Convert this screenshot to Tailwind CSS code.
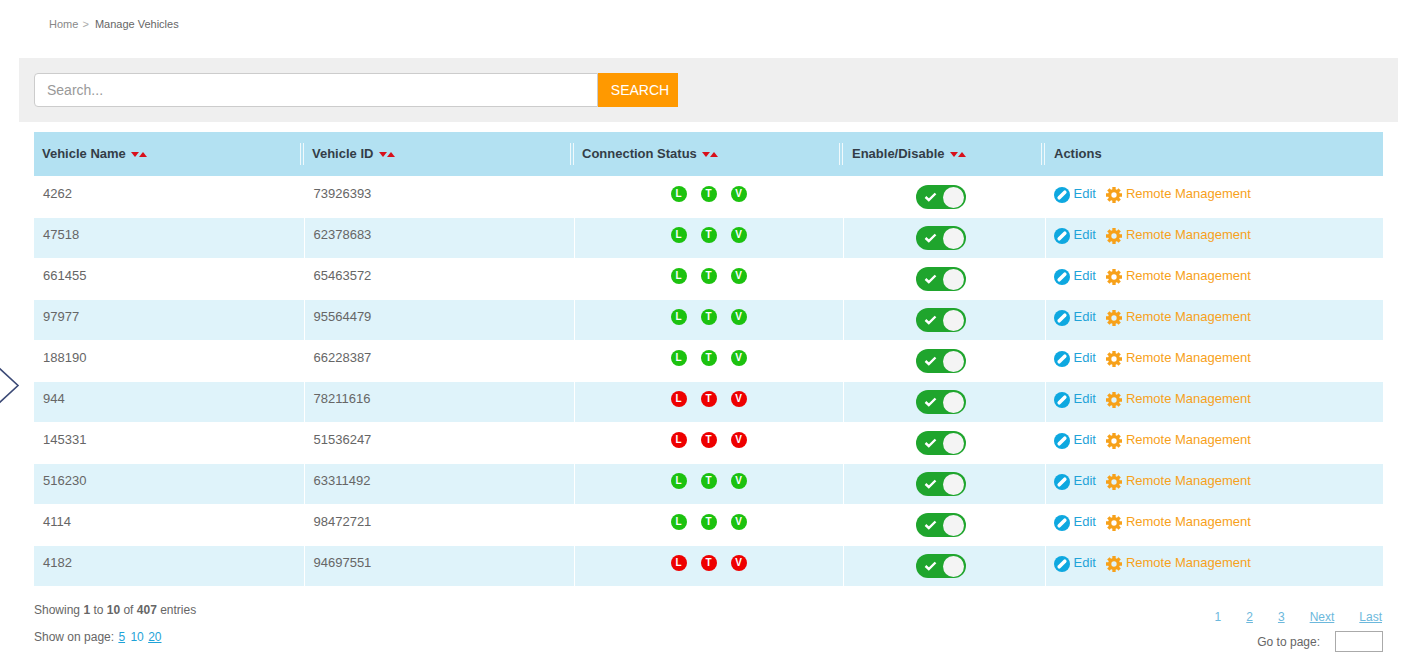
<!DOCTYPE html>
<html lang="en">
<head>
    <meta charset="UTF-8">
    <meta name="viewport" content="width=device-width, initial-scale=1.0">
    <title>Manage Vehicles</title>
    <script src="https://cdn.jsdelivr.net/npm/@tailwindcss/browser@4"></script>
</head>
<body class="bg-white font-['Liberation_Sans',Arial,sans-serif] text-[13px] text-[#666] h-[661px] overflow-hidden relative">

    <!-- Side drawer handle -->
    <svg class="absolute left-0 top-[366px]" width="20" height="40" viewBox="0 0 20 40" fill="none">
        <path d="M-1 2 L18 19.5 L-1 37" stroke="#3c4a76" stroke-width="1.6"/>
    </svg>

    <!-- Breadcrumb -->
    <nav class="pl-[49px] pt-[17px] h-[58px] text-[11px] leading-[14px]">
        <span class="text-[#888]">Home</span>
        <span class="text-[#aaa] ml-[1px] mr-[3px]">&gt;</span>
        <span class="text-[#666]">Manage Vehicles</span>
    </nav>

    <!-- Search -->
    <div class="ml-[19px] w-[1379px] h-[64px] bg-[#efefef] pl-[15px] pt-[15px] flex">
        <input type="text" placeholder="Search..." class="w-[564px] h-[34px] bg-white border border-[#ccc] rounded-l-[4px] px-3 text-sm outline-none placeholder:text-[#999]">
        <button class="w-[80px] h-[34px] pl-[4px] bg-[#ff9900] text-white text-sm">SEARCH</button>
    </div>

    <!-- Vehicles table -->
    <div class="ml-[34px] mt-[10px] w-[1349px]">
        <table class="w-full table-fixed border-collapse">
            <colgroup>
                <col class="w-[270px]"><col class="w-[270px]"><col class="w-[269px]"><col class="w-[202px]"><col>
            </colgroup>
            <thead>
                <tr class="h-[44px] bg-[#b3e1f2] text-[#333d47] text-left">
                    <th class="font-bold pl-[8px] relative">Vehicle Name</th>
                    <th class="font-bold pl-[8px] relative">Vehicle ID</th>
                    <th class="font-bold pl-[8px] relative">Connection Status</th>
                    <th class="font-bold pl-[9px] relative">Enable/Disable</th>
                    <th class="font-bold pl-[9px]">Actions</th>
                </tr>
            </thead>
            <tbody id="rows" class="leading-[20px]"></tbody>
        </table>
    </div>

    <!-- Footer -->
    <div class="ml-[34px] w-[1349px] flex justify-between">
        <div>
            <p class="mt-[17px] text-[12px] leading-[14px]">Showing <b>1</b> to <b>10</b> of <b>407</b> entries</p>
            <p class="mt-[13px] text-[12px] leading-[14px]">Show on page:
                <a class="ml-[1px] text-[#1fa3d8] underline">5</a>
                <a class="ml-[2px] text-[#1fa3d8]">10</a>
                <a class="ml-[1px] text-[#1fa3d8] underline">20</a>
            </p>
        </div>
        <div class="flex flex-col items-end">
            <div class="mt-[24px] mr-[1px] flex gap-[25px] text-[12px] leading-[14px] text-[#6cb8dc]">
                <a>1</a><a class="underline">2</a><a class="underline">3</a><a class="underline">Next</a><a class="underline">Last</a>
            </div>
            <div class="mt-[7px] flex items-center gap-[15px] text-[12px]">
                <span>Go to page:</span>
                <input type="text" class="w-[48px] h-[21px] border border-[#aaa] outline-none">
            </div>
        </div>
    </div>

    <script>
        const vehicles = [
            ['4262', '73926393', true], ['47518', '62378683', true], ['661455', '65463572', true],
            ['97977', '95564479', true], ['188190', '66228387', true], ['944', '78211616', false],
            ['145331', '51536247', false], ['516230', '63311492', true], ['4114', '98472721', true],
            ['4182', '94697551', false]
        ];

        const sortArrows = `<svg class="inline-block ml-[1.5px] align-[1px]" width="16" height="5" viewBox="0 0 16 5"><path d="M0 0h8L4 5z" fill="#d8101c"/><path d="M8 5h8L12 0z" fill="#d8101c"/></svg>`;

        // header separators and sort arrows
        document.querySelectorAll('thead th').forEach((th, i) => {
            if (i < 4) {
                th.insertAdjacentHTML('beforeend', ' ' + sortArrows);
                th.insertAdjacentHTML('beforeend', `<span class="absolute right-0 top-[11px] h-[22px] w-[4px] border-x border-white/80"></span>`);
            }
        });

        const dot = (letter, ok) => `<span class="w-[16px] h-[16px] rounded-full flex items-center justify-center text-white text-[10px] font-bold ${ok ? 'bg-[#1cc20f]' : 'bg-[#ee0000]'}">${letter}</span>`;

        const editIcon = `<svg width="16" height="16" viewBox="0 0 16 16" class="shrink-0 mt-[3px]"><circle cx="8" cy="8" r="8" fill="#0ea8e0"/><path d="M5.200 10.800L10.800 5.200" stroke="#fff" stroke-width="3.600" stroke-linecap="round"/></svg>`;
        const gearIcon = `<svg width="16" height="16" viewBox="0 0 24 24" class="shrink-0 mt-[3px]" fill="none" stroke="#f7a11a"><circle cx="12" cy="12" r="6.500" stroke-width="5"/><path d="M12 0v6M12 18v6M0 12h6M18 12h6M3.500 3.500l4.200 4.200M16.300 16.300l4.200 4.200M20.500 3.500l-4.200 4.200M7.700 16.300l-4.200 4.200" stroke-width="5"/></svg>`;

        document.getElementById('rows').innerHTML = vehicles.map(([name, id, ok], i) => `
            <tr class="h-[41px] border-t border-white ${i % 2 ? 'bg-[#dff3fa]' : 'bg-white'}">
                <td class="pl-[9px] pb-[5px] border-r border-white">${name}</td>
                <td class="pl-[9px] pb-[5px] border-r border-white">${id}</td>
                <td class="pb-[6px] border-r border-white">
                    <div class="flex gap-[14px] pl-[96px]">${dot('L', ok)}${dot('T', ok)}${dot('V', ok)}</div>
                </td>
                <td class="border-r border-white">
                    <div class="ml-[72px] mt-[1px] w-[50px] h-[24px] rounded-full bg-[#1fa52d] relative">
                        <svg class="absolute left-[8px] top-[7px]" width="13" height="10" viewBox="0 0 13 10" fill="none"><path d="M1.500 5l3.300 3L11.500 1.500" stroke="#fff" stroke-width="2.400"/></svg>
                        <span class="absolute right-[2px] top-[1.500px] w-[21px] h-[21px] rounded-full bg-[#f4f4f4]"></span>
                    </div>
                </td>
                <td class="pl-[8px] pb-[5px]">
                    <div class="flex">
                        ${editIcon}<a class="ml-[4px] text-[#1fa3d8]">Edit</a>
                        <span class="ml-[10px]">${gearIcon}</span><a class="ml-[4px] text-[#f7a11a]">Remote Management</a>
                    </div>
                </td>
            </tr>`).join('');
    </script>
</body>
</html>
